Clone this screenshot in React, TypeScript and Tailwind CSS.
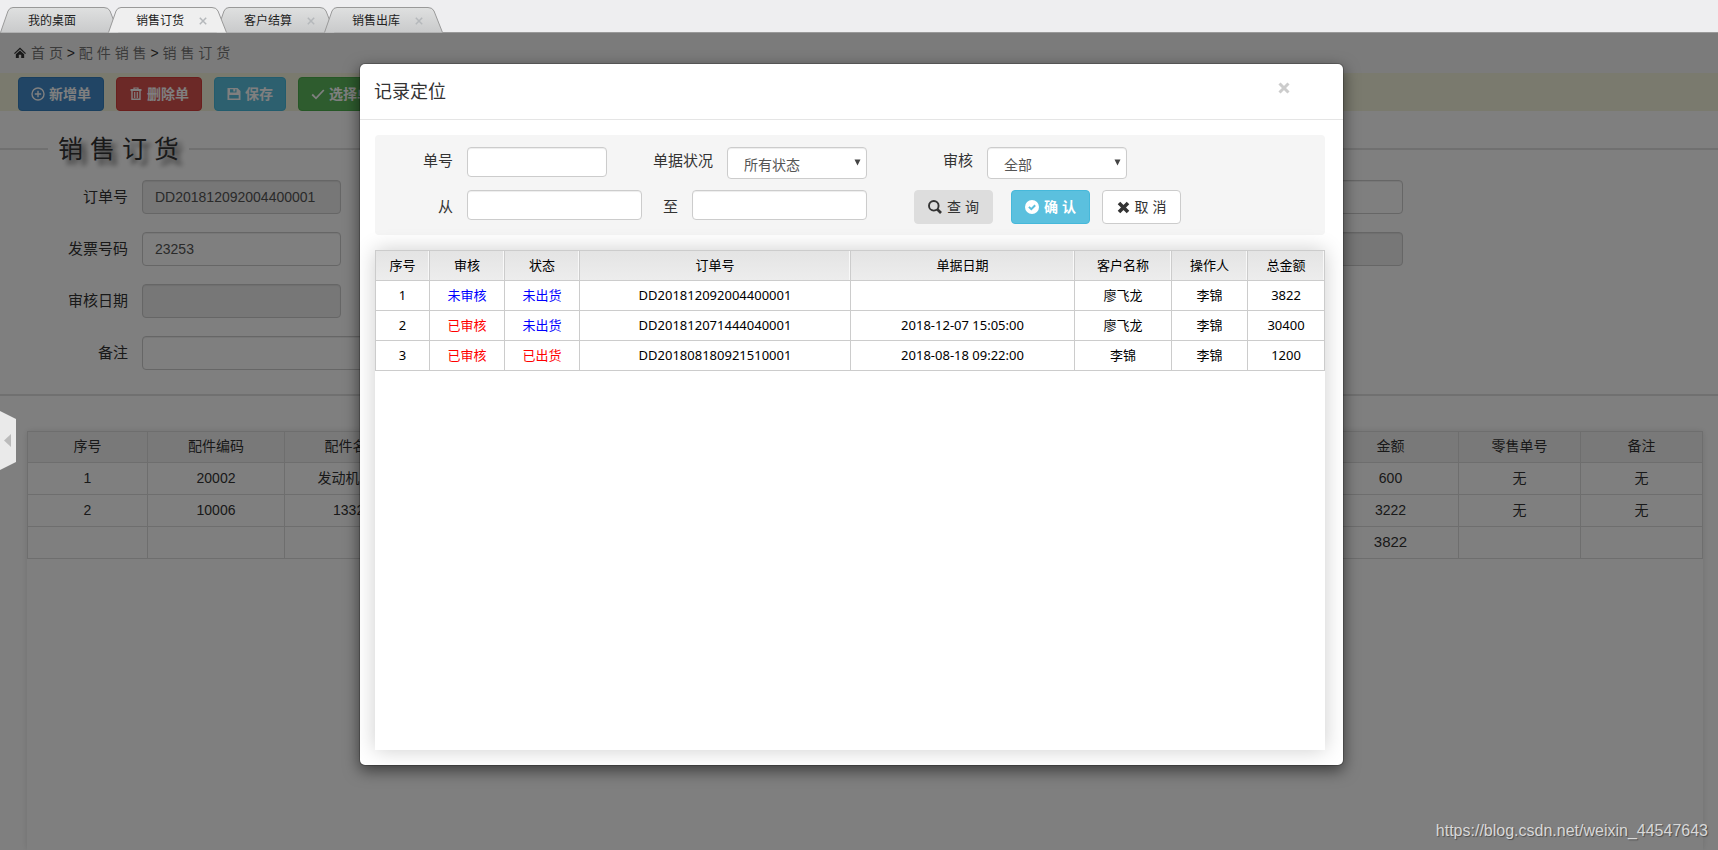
const tabs = ["我的桌面", "销售订货", "客户结算", "销售出库"];
const activeTab = 1;

const orderLines = [
  { no: "1", code: "20002", name: "发动机总成", amount: "600", retail: "无", note: "无" },
  { no: "2", code: "10006", name: "13321", amount: "3222", retail: "无", note: "无" },
];

const records = [
  { no: 1, checked: false, shipped: false, order: "DD201812092004400001", date: "", customer: "廖飞龙", operator: "李锦", total: 3822 },
  { no: 2, checked: true, shipped: false, order: "DD201812071444040001", date: "2018-12-07 15:05:00", customer: "廖飞龙", operator: "李锦", total: 30400 },
  { no: 3, checked: true, shipped: true, order: "DD201808180921510001", date: "2018-08-18 09:22:00", customer: "李锦", operator: "李锦", total: 1200 },
];

const pageInput =
  "h-[34px] w-full rounded border border-[#ccc] bg-white px-3 text-sm text-[#555] shadow-[inset_0_1px_1px_rgba(0,0,0,0.075)] disabled:bg-[#eee]";
const pageLabel = "pr-[14px] text-right text-[15px] text-[#333]";
const filterInput =
  "h-[30px] rounded border border-[#ccc] bg-white px-3 text-sm text-[#555] shadow-[inset_0_1px_1px_rgba(0,0,0,0.075)]";
const filterLabel = "pr-[14px] text-right text-[15px] text-[#333]";
const toolButton = "flex h-[34px] items-center gap-1 rounded border px-3 text-sm font-bold text-white";
const filterButton = "flex h-[34px] w-[79px] items-center justify-center gap-[5px] rounded border text-sm";

function TabShape({ active }: { active: boolean }) {
  return (
    <svg className="absolute inset-0" width="119" height="26" viewBox="0 0 119 26" aria-hidden="true">
      <defs>
        <linearGradient id="tabFill" x1="0" y1="0" x2="0" y2="1">
          <stop offset="0" stopColor="#dfe0e0" />
          <stop offset="1" stopColor="#c9cacb" />
        </linearGradient>
      </defs>
      <path
        d="M0.5 25.5 L8 4 Q9.5 0.5 13 0.5 H104 Q108.500 0.5 110 4 L118.500 25.5"
        fill={active ? "#efefef" : "url(#tabFill)"}
        stroke="#999"
      />
    </svg>
  );
}

function HomeIcon() {
  return (
    <svg width="12" height="12" viewBox="0 0 13 12" fill="#333" aria-hidden="true">
      <path d="M6.500 0 L13 6.200 L12 7.200 L6.500 2 L1 7.200 L0 6.200 Z" />
      <path d="M6.500 3.200 L11 7.400 V11.500 H7.800 V8 H5.200 V11.500 H2 V7.400 Z" />
    </svg>
  );
}

function PlusCircleIcon() {
  return (
    <svg width="14" height="14" viewBox="0 0 14 14" fill="none" stroke="currentColor" strokeWidth="1.4" aria-hidden="true">
      <circle cx="7" cy="7" r="6" />
      <path d="M7 3.800 V10.200 M3.800 7 H10.200" />
    </svg>
  );
}

function TrashIcon() {
  return (
    <svg width="14" height="14" viewBox="0 0 14 14" fill="none" stroke="currentColor" aria-hidden="true">
      <path d="M1.500 3 H12.500" strokeWidth="2" />
      <path d="M5 2 V1 H9 V2" strokeWidth="1.200" />
      <path d="M3 4 V12.300 H11 V4" strokeWidth="1.400" />
      <path d="M5.700 5 V11 M8.300 5 V11" strokeWidth="1.200" />
    </svg>
  );
}

function SaveIcon() {
  return (
    <svg width="14" height="14" viewBox="0 0 14 14" aria-hidden="true">
      <path
        d="M0.500 1 H10.500 L13.500 4 V13 H0.500 Z M3 2.300 V5.600 H9.500 V2.300 H8.300 V4.500 H6.300 V2.300 Z M2.300 8 V11.400 H11.700 V8 Z"
        fill="currentColor"
        fillRule="evenodd"
      />
    </svg>
  );
}

function CheckIcon() {
  return (
    <svg width="14" height="14" viewBox="0 0 14 14" fill="none" stroke="currentColor" strokeWidth="1.8" aria-hidden="true">
      <path d="M1.200 7.500 L5 11.300 L12.800 3" />
    </svg>
  );
}

function SearchIcon() {
  return (
    <svg width="14" height="14" viewBox="0 0 14 14" fill="none" stroke="currentColor" aria-hidden="true">
      <circle cx="5.800" cy="5.800" r="4.800" strokeWidth="1.900" />
      <path d="M9 9 L13 13" strokeWidth="2.600" />
    </svg>
  );
}

function CheckCircleIcon() {
  return (
    <svg width="14" height="14" viewBox="0 0 14 14" aria-hidden="true">
      <circle cx="7" cy="7" r="7" fill="currentColor" />
      <path d="M3.900 6.900 L6.300 9.200 L10.200 5.200" fill="none" stroke="#5bc0de" strokeWidth="2" />
    </svg>
  );
}

function CrossIcon() {
  return (
    <svg width="13" height="13" viewBox="0 0 13 13" fill="none" stroke="currentColor" strokeWidth="3.600" aria-hidden="true">
      <path d="M2 2 L11 11 M11 2 L2 11" />
    </svg>
  );
}

function FilterSelect({ id, options }: { id: string; options: string[] }) {
  return (
    <div className="relative w-[140px]">
      <select
        id={id}
        className="h-8 w-full appearance-none rounded border border-[#ccc] bg-white px-4 pt-1 text-sm text-[#555] shadow-[inset_0_1px_1px_rgba(0,0,0,0.075)]"
      >
        {options.map((option) => (
          <option key={option}>{option}</option>
        ))}
      </select>
      <svg className="pointer-events-none absolute top-3 right-[6px]" width="7" height="7" viewBox="0 0 7 7" aria-hidden="true">
        <path d="M0.500 0.500 H6.500 L3.500 6.500 Z" fill="#444" />
      </svg>
    </div>
  );
}

function TabBar() {
  return (
    <nav className="flex h-[33px] items-end border-b border-[#999] bg-[#eeeef0]">
      {tabs.map((tab, i) => (
        <div key={tab} className={i === activeTab ? "relative z-10 -mr-[11px] -mb-px h-[26px] w-[119px]" : "relative -mr-[11px] -mb-px h-[26px] w-[119px]"}>
          <TabShape active={i === activeTab} />
          <div className="relative flex h-full items-center pt-px pl-7 text-xs text-[#222]">
            <a href="#">{tab}</a>
            {i > 0 && (
              <button type="button" aria-label="关闭" className="ml-[15px] text-[#b5b8bb]">
                <svg width="8" height="8" viewBox="0 0 8 8" fill="none" stroke="currentColor" strokeWidth="1.5" aria-hidden="true">
                  <path d="M0.800 0.800 L7.200 7.200 M7.200 0.800 L0.800 7.200" />
                </svg>
              </button>
            )}
          </div>
        </div>
      ))}
    </nav>
  );
}

function OrderForm() {
  return (
    <fieldset className="mt-5 border-y-2 border-[#e0e0e0] pb-6">
      <legend className="ml-12 px-[10px] text-[25px] leading-9 text-[#333] [text-shadow:5px_5px_5px_rgba(0,0,0,0.6)]">
        销 售 订 货
      </legend>
      <div className="grid grid-cols-[142px_199px_155px_199px_155px_199px_155px_199px] items-center gap-y-[18px] pt-[13px]">
        <label htmlFor="orderNo" className={pageLabel}>订单号</label>
        <input id="orderNo" className={pageInput} defaultValue="DD201812092004400001" disabled />
        <input aria-label="单据日期" className={`${pageInput} col-start-8`} />

        <label htmlFor="invoiceNo" className={pageLabel}>发票号码</label>
        <input id="invoiceNo" className={pageInput} defaultValue="23253" />
        <input aria-label="总金额" className={`${pageInput} col-start-8`} disabled />

        <label htmlFor="checkDate" className={pageLabel}>审核日期</label>
        <input id="checkDate" className={pageInput} disabled />

        <label htmlFor="note" className={`${pageLabel} col-start-1`}>备注</label>
        <input id="note" className={`${pageInput} col-span-5`} />
      </div>
    </fieldset>
  );
}

function OrderTable() {
  const cell = "border border-[#ddd] pb-[2px]";
  return (
    <div className="mx-[15px] mt-[35px] ml-[27px] flex-1 shadow-[0_0_6px_rgba(0,0,0,0.12)]">
      <table className="w-full table-fixed border-collapse text-center text-sm text-[#333]">
        <colgroup>
          <col className="w-[120px]" />
          <col className="w-[137px]" />
          <col className="w-[136px]" />
          <col />
          <col className="w-[136px]" />
          <col className="w-[122px]" />
          <col className="w-[122px]" />
        </colgroup>
        <thead>
          <tr className="h-[31px] bg-[#f3f3f3]">
            <th className={`${cell} font-normal`}>序号</th>
            <th className={`${cell} font-normal`}>配件编码</th>
            <th className={`${cell} font-normal`}>配件名称</th>
            <th className={cell} />
            <th className={`${cell} font-normal`}>金额</th>
            <th className={`${cell} font-normal`}>零售单号</th>
            <th className={`${cell} font-normal`}>备注</th>
          </tr>
        </thead>
        <tbody>
          {orderLines.map((line) => (
            <tr key={line.no} className="h-8">
              <td className={cell}>{line.no}</td>
              <td className={cell}>{line.code}</td>
              <td className={cell}>{line.name}</td>
              <td className={cell} />
              <td className={cell}>{line.amount}</td>
              <td className={cell}>{line.retail}</td>
              <td className={cell}>{line.note}</td>
            </tr>
          ))}
          <tr className="h-8">
            <td className={cell} />
            <td className={cell} />
            <td className={cell} />
            <td className={cell} />
            <td className={`${cell} text-[15px]`}>3822</td>
            <td className={cell} />
            <td className={cell} />
          </tr>
        </tbody>
      </table>
    </div>
  );
}

function RecordTable() {
  const cell = "border border-[#ccc] pb-px";
  const head = "border border-[#ccc] pb-px font-normal shadow-[inset_-1px_0_0_#f8f8f8]";
  return (
    <table className="w-full table-fixed border-collapse text-center font-['Noto_Sans','Noto_Sans_CJK_SC',sans-serif] text-[13px] leading-5 text-black">
      <colgroup>
        <col className="w-[54px]" />
        <col className="w-[75px]" />
        <col className="w-[75px]" />
        <col />
        <col className="w-[224px]" />
        <col className="w-[97px]" />
        <col className="w-[76px]" />
        <col className="w-[77px]" />
      </colgroup>
      <thead>
        <tr className="h-[30px] bg-linear-to-b from-[#e4e4e4] to-[#ededed]">
          <th className={head}>序号</th>
          <th className={head}>审核</th>
          <th className={head}>状态</th>
          <th className={head}>订单号</th>
          <th className={head}>单据日期</th>
          <th className={head}>客户名称</th>
          <th className={head}>操作人</th>
          <th className={head}>总金额</th>
        </tr>
      </thead>
      <tbody>
        {records.map((r) => (
          <tr key={r.no} className="h-[30px]">
            <td className={cell}>{r.no}</td>
            <td className={r.checked ? `${cell} text-[#f00]` : `${cell} text-[#00f]`}>{r.checked ? "已审核" : "未审核"}</td>
            <td className={r.shipped ? `${cell} text-[#f00]` : `${cell} text-[#00f]`}>{r.shipped ? "已出货" : "未出货"}</td>
            <td className={cell}>{r.order}</td>
            <td className={cell}>{r.date}</td>
            <td className={cell}>{r.customer}</td>
            <td className={cell}>{r.operator}</td>
            <td className={cell}>{r.total}</td>
          </tr>
        ))}
      </tbody>
    </table>
  );
}

function RecordDialog() {
  return (
    <div
      role="dialog"
      aria-labelledby="dialogTitle"
      className="relative w-[985px] rounded-md border border-black/20 bg-white bg-clip-padding shadow-[0_5px_15px_rgba(0,0,0,0.5)]"
    >
      <header className="flex h-14 items-start justify-between border-b border-[#e5e5e5] pt-4 pr-[53px] pl-[14px]">
        <h4 id="dialogTitle" className="text-lg leading-6 text-[#333]">记录定位</h4>
        <button type="button" aria-label="关闭" className="mt-[2px] text-[#ccc]">
          <svg width="12" height="12" viewBox="0 0 12 12" fill="none" stroke="currentColor" strokeWidth="3" aria-hidden="true">
            <path d="M1.500 1.500 L10.500 10.500 M10.500 1.500 L1.500 10.500" />
          </svg>
        </button>
      </header>

      <div className="py-[15px] pr-[18px] pl-[15px]">
        <form className="h-[100px] rounded bg-[#f5f5f5] pt-3">
          <div className="flex h-[43px] items-start">
            <label htmlFor="billNo" className={`${filterLabel} w-[92px] leading-7`}>单号</label>
            <input id="billNo" className={`${filterInput} w-[140px]`} />
            <label htmlFor="billState" className={`${filterLabel} w-[120px] leading-7`}>单据状况</label>
            <FilterSelect id="billState" options={["所有状态", "未出货", "已出货"]} />
            <label htmlFor="audit" className={`${filterLabel} w-[120px] leading-7`}>审核</label>
            <FilterSelect id="audit" options={["全部", "未审核", "已审核"]} />
          </div>
          <div className="flex items-start">
            <label htmlFor="dateFrom" className={`${filterLabel} w-[92px] leading-[34px]`}>从</label>
            <input id="dateFrom" className={`${filterInput} w-[175px]`} />
            <label htmlFor="dateTo" className={`${filterLabel} w-[50px] leading-[34px]`}>至</label>
            <input id="dateTo" className={`${filterInput} w-[175px]`} />
            <button type="button" className={`${filterButton} ml-[47px] border-[#ddd] bg-[#ddd] text-[#333]`}>
              <SearchIcon />
              查 询
            </button>
            <button type="button" className={`${filterButton} ml-[18px] border-[#46b8da] bg-[#5bc0de] font-bold text-white`}>
              <CheckCircleIcon />
              确 认
            </button>
            <button type="button" className={`${filterButton} ml-3 border-[#ccc] bg-white text-[#333]`}>
              <CrossIcon />
              取 消
            </button>
          </div>
        </form>

        <div className="mt-[15px] min-h-[500px] bg-white shadow-[0_0_20px_rgba(0,0,0,0.2)]">
          <RecordTable />
        </div>
      </div>
    </div>
  );
}

export default function App() {
  return (
    <div className="flex min-h-screen flex-col bg-white font-['Liberation_Sans','Noto_Sans_CJK_SC',sans-serif]">
      <TabBar />

      <main className="relative flex flex-1 flex-col">
        <div className="flex h-10 items-center gap-[5px] bg-[#f6f6f6] pl-[14px] text-sm text-[#333]">
          <HomeIcon />
          <span>
            <a href="#" className="text-[#777]">首 页</a> &gt; <a href="#" className="text-[#777]">配 件 销 售</a> &gt;{" "}
            <a href="#" className="text-[#777]">销 售 订 货</a>
          </span>
        </div>

        <div className="flex h-[38px] items-end gap-3 bg-[#f5f5dc] pl-[18px]">
          <button type="button" className={`${toolButton} border-[#357ebd] bg-[#428bca]`}>
            <PlusCircleIcon />
            新增单
          </button>
          <button type="button" className={`${toolButton} border-[#d43f3a] bg-[#d9534f]`}>
            <TrashIcon />
            删除单
          </button>
          <button type="button" className={`${toolButton} border-[#46b8da] bg-[#5bc0de]`}>
            <SaveIcon />
            保存
          </button>
          <button type="button" className={`${toolButton} border-[#4cae4c] bg-[#5cb85c]`}>
            <CheckIcon />
            选择单
          </button>
        </div>

        <OrderForm />
        <OrderTable />

        {/* Backdrop and dialog */}
        <div className="absolute inset-0 flex items-start justify-center bg-black/50 pt-[30px] pr-[15px]">
          <RecordDialog />
        </div>

        {/* Sidebar handle */}
        <button type="button" aria-label="收起" className="absolute top-[378px] left-0">
          <svg width="16" height="59" viewBox="0 0 16 59" aria-hidden="true">
            <path d="M0 0 L16 8 V51 L0 59 Z" fill="#eaeaea" />
            <path d="M11 23 V36 L4 29.500 Z" fill="#bbb" />
          </svg>
        </button>

        <p className="absolute right-[10px] bottom-2 text-base leading-[22px] text-[#d8d8d8] [text-shadow:1px_1px_1px_rgba(0,0,0,0.4)]">
          https://blog.csdn.net/weixin_44547643
        </p>
      </main>
    </div>
  );
}
